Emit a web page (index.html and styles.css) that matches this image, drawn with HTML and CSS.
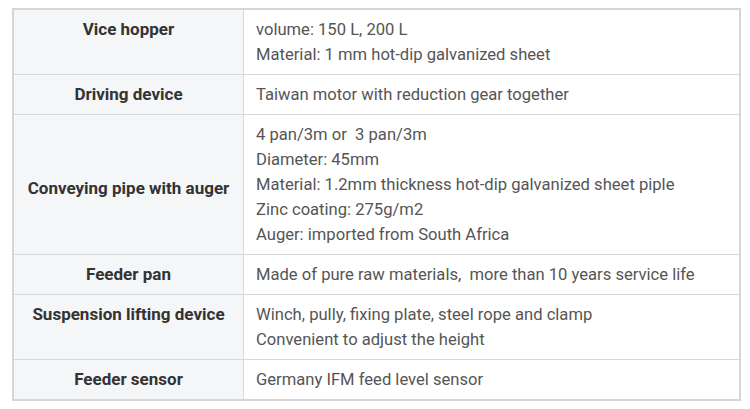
FILE: index.html
```html
<!DOCTYPE html>
<html>
<head>
<meta charset="utf-8">
<link rel="stylesheet" href="styles.css">
</head>
<body>
<table class="spec">
  <tr>
    <th class="top">Vice hopper</th>
    <td>volume: 150 L, 200 L<br>Material: 1 mm hot-dip galvanized sheet</td>
  </tr>
  <tr>
    <th>Driving device</th>
    <td>Taiwan motor with reduction gear together</td>
  </tr>
  <tr>
    <th class="low">Conveying pipe with auger</th>
    <td>4 pan/3m or&nbsp; 3 pan/3m<br>Diameter: 45mm<br>Material: 1.2mm thickness hot-dip galvanized sheet piple<br>Zinc coating: 275g/m2<br>Auger: imported from South Africa</td>
  </tr>
  <tr>
    <th>Feeder pan</th>
    <td>Made of pure raw materials,&nbsp; more than 10 years service life</td>
  </tr>
  <tr>
    <th class="top">Suspension lifting device</th>
    <td>Winch, pully, fixing plate, steel rope and clamp<br>Convenient to adjust the height</td>
  </tr>
  <tr>
    <th>Feeder sensor</th>
    <td>Germany IFM feed level sensor</td>
  </tr>
</table>
</body>
</html>
```
FILE: styles.css
```css
html, body {
  margin: 0;
  padding: 0;
  background: #fff;
}
body {
  padding: 8px 0 0 12px;
  font-family: Roboto, "Liberation Sans", sans-serif;
}
.spec {
  border-collapse: collapse;
  width: 729px;
  border: 2px solid #d6d6d6;
  line-height: 25px;
}
.spec th, .spec td {
  border: 1px solid #d8d8d8;
  padding: 7px 12px;
  vertical-align: middle;
}
.spec th {
  width: 205px;
  background: #f5f6f7;
  color: #333;
  font-size: 17px;
  font-weight: 700;
  text-align: center;
}
.spec th.top {
  vertical-align: top;
}
.spec th.low {
  padding-top: 15px;
  padding-bottom: 7px;
}
.spec td {
  background: #fff;
  color: #555;
  font-size: 16.6px;
  font-weight: 400;
  text-align: left;
}
```
